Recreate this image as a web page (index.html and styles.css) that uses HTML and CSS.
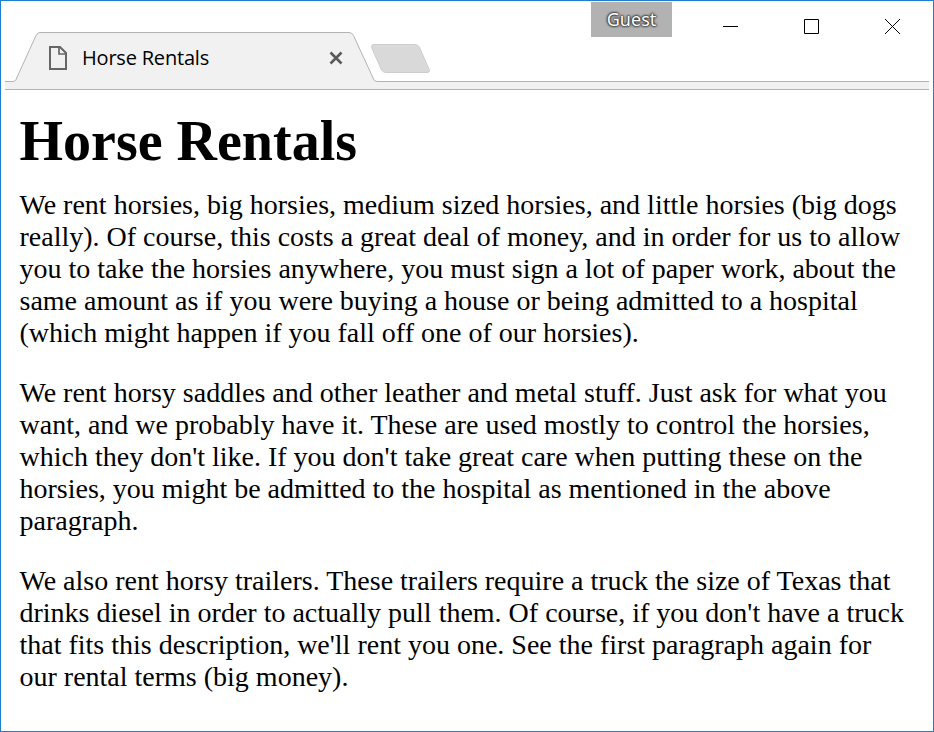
FILE: index.html
```html
<!DOCTYPE html>
<html lang="en">
<head>
<meta charset="utf-8">
<title>Horse Rentals</title>
<link rel="stylesheet" href="styles.css">
</head>
<body>
<div class="window">
  <header class="titlebar">
    <svg class="tab-shape" width="934" height="91" viewBox="0 0 934 91" aria-hidden="true">
      <path d="M5 81.5H13Q15 81.5 16 79.5L36 35.5Q37.500 32.500 40 32.500H349Q352 32.500 353.500 35.500L373.500 79Q374.500 81.500 377 81.500H929V89.500H5Z" fill="#f1f1f1"/>
      <path d="M5 81.500H13Q15 81.500 16 79.500L36 35.500Q37.500 32.500 40 32.500H349Q352 32.500 353.500 35.500L373.500 79Q374.500 81.500 377 81.500H929M5 89.500H929" fill="none" stroke="#b3b3b3"/>
      <path d="M374 44.500H415Q418 44.500 419.300 47L429 69Q430.500 72.500 427 72.500H386Q383 72.500 381.500 70L372 48.500Q370.500 44.500 374 44.500Z" fill="#d9d9d9" stroke="#cecece"/>
    </svg>
    <div class="tab">
      <svg class="page-icon" width="20" height="26" viewBox="0 0 20 26" fill="none" stroke="#666" stroke-width="2"><path d="M2 2H12L18 8V24H2Z"/><path d="M11 2V9H18" stroke-width="1.700"/></svg>
      <span class="tab-title">Horse Rentals</span>
      <svg class="tab-close" width="14" height="14" viewBox="0 0 14 14" stroke="#5a5a5a" stroke-width="2.600"><path d="M1.500 1.500L12.500 12.500M12.500 1.500L1.500 12.500"/></svg>
    </div>
    <div class="controls">
      <span class="guest">Guest</span>
      <svg width="81" height="51" viewBox="0 0 81 51" stroke="#000" fill="none"><path d="M51 25.500H66"/></svg>
      <svg width="81" height="51" viewBox="0 0 81 51" stroke="#000" fill="none"><path d="M51.500 18.500H65.500V32.500H51.500Z"/></svg>
      <svg width="81" height="51" viewBox="0 0 81 51" stroke="#000" fill="none"><path d="M51 18L66 33M66 18L51 33"/></svg>
    </div>
  </header>
  <main class="page">
    <h1>Horse Rentals</h1>
    <p>We rent horsies, big horsies, medium sized horsies, and little horsies (big dogs really). Of course, this costs a great deal of money, and in order for us to allow you to take the horsies anywhere, you must sign a lot of paper work, about the same amount as if you were buying a house or being admitted to a hospital (which might happen if you fall off one of our horsies).</p>
    <p>We rent horsy saddles and other leather and metal stuff. Just ask for what you want, and we probably have it. These are used mostly to control the horsies, which they don't like. If you don't take great care when putting these on the horsies, you might be admitted to the hospital as mentioned in the above paragraph.</p>
    <p>We also rent horsy trailers. These trailers require a truck the size of Texas that drinks diesel in order to actually pull them. Of course, if you don't have a truck that fits this description, we'll rent you one. See the first paragraph again for our rental terms (big money).</p>
  </main>
</div>
</body>
</html>
```
FILE: styles.css
```css
* { box-sizing: border-box; }

body { margin: 0; background: #fff; }

.window {
  width: 934px;
  height: 732px;
  border: 1px solid #1b80d2;
  background: #fff;
  overflow: hidden;
}

.titlebar {
  position: relative;
  display: flex;
  justify-content: space-between;
  height: 89px;
  font-family: "Noto Sans", sans-serif;
}

.tab-shape { position: absolute; left: -1px; top: -1px; }

.tab {
  position: relative;
  display: flex;
  align-items: center;
  width: 376px;
  height: 50px;
  margin-top: 32px;
  padding: 0 34px 0 47px;
  color: #000;
}

.page-icon { margin-top: -1px; }

.tab-title {
  flex: 1;
  margin: 0 0 0 14px;
  font-family: "Open Sans", sans-serif;
  font-size: 20px;
  letter-spacing: -0.2px;
  line-height: 28px;
  white-space: nowrap;
}

.controls { position: relative; display: flex; padding-right: 18px; }

.controls svg { display: block; }

.guest {
  width: 81px;
  height: 35px;
  margin-top: 1px;
  background: #b2b2b2;
  color: #fff;
  font-size: 18px;
  line-height: 35px;
  text-align: center;
  text-shadow: 0 0 2px #333, 0 0 2px #333, 0 0 2px #333, 0 0 3px #444;
}

.page {
  padding: 19px 18px 0 18.5px;
  color: #000;
  font-family: "Liberation Serif", serif;
  font-size: 28px;
  line-height: 32px;
}

h1 { margin: 0 0 16px; font-size: 56px; line-height: 64px; }

p { margin: 0 0 28px; }
```
